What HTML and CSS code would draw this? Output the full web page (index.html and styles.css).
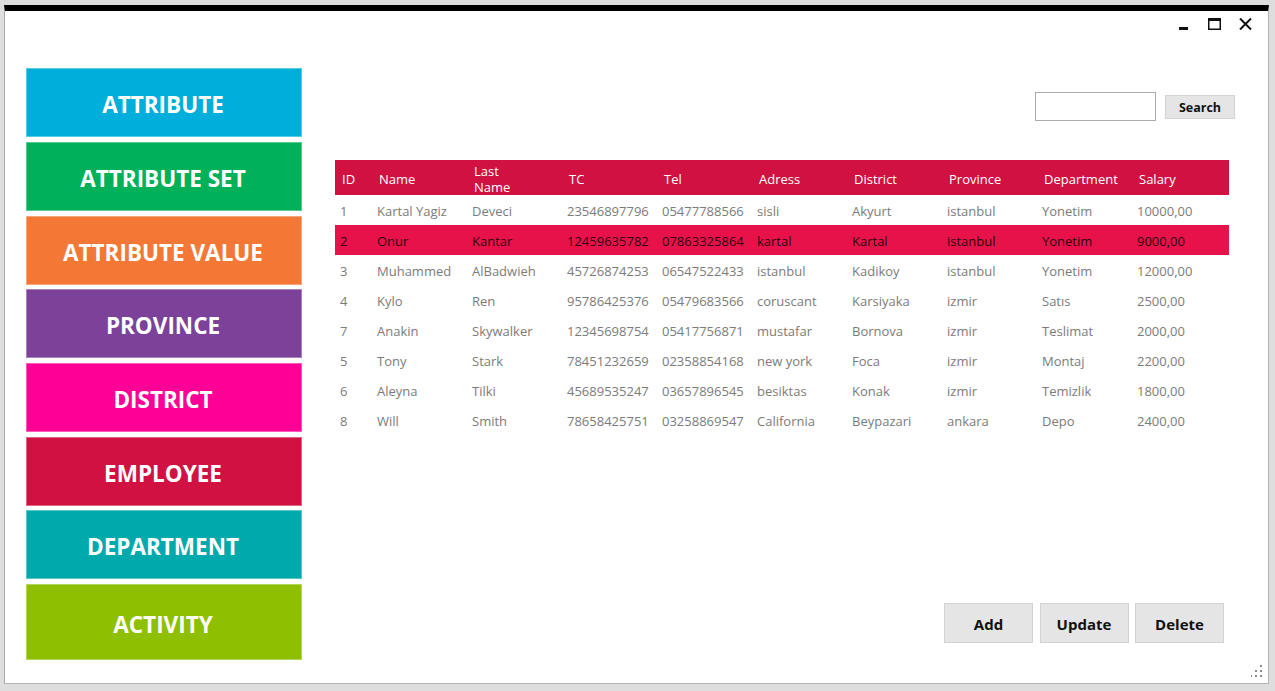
FILE: index.html
```html
<!DOCTYPE html>
<html>
<head>
<meta charset="utf-8">
<link rel="stylesheet" href="styles.css">
</head>
<body>
<div class="window">
  <div class="titlebar">
    <span class="ctl ctl-min"><svg width="9" height="3" viewBox="0 0 9 3"><rect width="9" height="3" fill="#111"/></svg></span>
    <span class="ctl ctl-max"><svg width="13" height="12" viewBox="0 0 13 12"><rect x="0.75" y="1.5" width="11.5" height="9.75" fill="none" stroke="#111" stroke-width="1.5"/><rect x="0" y="0" width="13" height="3" fill="#111"/></svg></span>
    <span class="ctl ctl-close"><svg width="13" height="12" viewBox="0 0 13 12"><path d="M1 0.5 L12 11.5 M12 0.5 L1 11.5" stroke="#111" stroke-width="2" fill="none"/></svg></span>
  </div>
  <div class="main">
    <nav class="sidebar">
      <div class="tile c-attr">ATTRIBUTE</div>
      <div class="tile c-set">ATTRIBUTE SET</div>
      <div class="tile c-val">ATTRIBUTE VALUE</div>
      <div class="tile c-prov">PROVINCE</div>
      <div class="tile c-dist">DISTRICT</div>
      <div class="tile c-emp">EMPLOYEE</div>
      <div class="tile c-dep">DEPARTMENT</div>
      <div class="tile c-act tile-last">ACTIVITY</div>
    </nav>
    <section class="content">
      <div class="searchrow">
        <input class="searchbox" type="text">
        <button class="searchbtn">Search</button>
      </div>
      <table class="grid">
        <colgroup>
          <col class="w-id"><col class="w-c"><col class="w-c"><col class="w-c"><col class="w-c"><col class="w-c"><col class="w-c"><col class="w-c"><col class="w-c"><col class="w-last">
        </colgroup>
        <thead>
          <tr><th>ID</th><th>Name</th><th class="two">Last<br>Name</th><th>TC</th><th>Tel</th><th>Adress</th><th>District</th><th>Province</th><th>Department</th><th>Salary</th></tr>
        </thead>
        <tbody>
          <tr><td>1</td><td>Kartal Yagiz</td><td>Deveci</td><td>23546897796</td><td>05477788566</td><td>sisli</td><td>Akyurt</td><td>istanbul</td><td>Yonetim</td><td>10000,00</td></tr>
          <tr class="sel"><td>2</td><td>Onur</td><td>Kantar</td><td>12459635782</td><td>07863325864</td><td>kartal</td><td>Kartal</td><td>istanbul</td><td>Yonetim</td><td>9000,00</td></tr>
          <tr><td>3</td><td>Muhammed</td><td>AlBadwieh</td><td>45726874253</td><td>06547522433</td><td>istanbul</td><td>Kadikoy</td><td>istanbul</td><td>Yonetim</td><td>12000,00</td></tr>
          <tr><td>4</td><td>Kylo</td><td>Ren</td><td>95786425376</td><td>05479683566</td><td>coruscant</td><td>Karsiyaka</td><td>izmir</td><td>Satıs</td><td>2500,00</td></tr>
          <tr><td>7</td><td>Anakin</td><td>Skywalker</td><td>12345698754</td><td>05417756871</td><td>mustafar</td><td>Bornova</td><td>izmir</td><td>Teslimat</td><td>2000,00</td></tr>
          <tr><td>5</td><td>Tony</td><td>Stark</td><td>78451232659</td><td>02358854168</td><td>new york</td><td>Foca</td><td>izmir</td><td>Montaj</td><td>2200,00</td></tr>
          <tr><td>6</td><td>Aleyna</td><td>Tilki</td><td>45689535247</td><td>03657896545</td><td>besiktas</td><td>Konak</td><td>izmir</td><td>Temizlik</td><td>1800,00</td></tr>
          <tr><td>8</td><td>Will</td><td>Smith</td><td>78658425751</td><td>03258869547</td><td>California</td><td>Beypazari</td><td>ankara</td><td>Depo</td><td>2400,00</td></tr>
        </tbody>
      </table>
      <div class="actions">
        <button class="actbtn">Add</button>
        <button class="actbtn">Update</button>
        <button class="actbtn">Delete</button>
      </div>
    </section>
  </div>
  <svg class="grip" width="12" height="12" viewBox="0 0 12 12">
    <rect x="9" y="0" width="2" height="2" fill="#8a8a8a"/>
    <rect x="4" y="5" width="2" height="2" fill="#8a8a8a"/>
    <rect x="9" y="5" width="2" height="2" fill="#8a8a8a"/>
    <rect x="-1" y="10" width="2" height="2" fill="#8a8a8a"/>
    <rect x="4" y="10" width="2" height="2" fill="#8a8a8a"/>
    <rect x="9" y="10" width="2" height="2" fill="#8a8a8a"/>
  </svg>
</div>
</body>
</html>
```
FILE: styles.css
```css
html, body {
  margin: 0;
  padding: 0;
  background: #dedede;
}
body {
  padding: 5px 6px 7px 4px;
  font-family: "Open Sans", "Noto Sans", sans-serif;
}
.window {
  position: relative;
  box-sizing: border-box;
  width: 1265px;
  height: 679px;
  background: #fff;
  border-top: 6px solid #000;
  border-left: 1px solid #a9a9a9;
  border-right: 1px solid #b5b5b5;
  border-bottom: 1px solid #b5b5b5;
  display: flex;
  flex-direction: column;
}
.titlebar {
  height: 30px;
  display: flex;
  justify-content: flex-end;
  align-items: flex-start;
  padding-right: 7px;
}
.ctl {
  display: flex;
  width: 31px;
  justify-content: center;
}
.ctl-min { padding-top: 16px; }
.ctl-max { padding-top: 7px; }
.ctl-close { padding-top: 7px; }
.ctl svg { display: block; }
.main {
  flex: 1;
  display: flex;
  padding: 28px 33px 23px 21px;
  gap: 33px;
}
.sidebar {
  width: 276px;
  display: flex;
  flex-direction: column;
  gap: 4.7px;
}
.tile {
  box-sizing: border-box;
  height: 69px;
  display: flex;
  align-items: center;
  justify-content: center;
  color: #fff;
  font-weight: 700;
  font-size: 22.5px;
  border: 1px solid rgba(255,255,255,0.35);
  padding-top: 4px;
  padding-right: 2px;
}
.tile-last { height: 76px; }
.c-attr { background: #00aedb; }
.c-set  { background: #00b159; }
.c-val  { background: #f37735; }
.c-prov { background: #7c4199; }
.c-dist { background: #ff0097; }
.c-emp  { background: #d11141; }
.c-dep  { background: #00aaac; }
.c-act  { background: #8ebf00; }

.content {
  flex: 1;
  display: flex;
  flex-direction: column;
}
.searchrow {
  margin-top: 24px;
  display: flex;
  justify-content: flex-end;
  align-items: center;
  gap: 9px;
  height: 29px;
}
.searchbox {
  box-sizing: border-box;
  width: 121px;
  height: 29px;
  margin: 0;
  border: 1px solid #acacac;
  background: #fff;
  padding: 0 4px;
}
.searchbtn {
  box-sizing: border-box;
  width: 70px;
  height: 24px;
  margin: 0;
  padding: 2px 0 0 0;
  background: #e5e5e5;
  border: 1px solid #d4d4d4;
  font-family: "Open Sans", "Noto Sans", sans-serif;
  font-weight: 700;
  font-size: 12.5px;
  color: #111;
}
.grid {
  margin-top: 39px;
  width: 894px;
  border-collapse: collapse;
  table-layout: fixed;
  font-size: 13px;
}
.w-id { width: 37px; }
.w-c { width: 95px; }
.w-last { width: 97px; }
.grid th {
  background: #d11141;
  color: #fff;
  font-weight: 400;
  text-align: left;
  height: 35px;
  box-sizing: border-box;
  padding: 3px 0 0 7px;
  line-height: 16px;
  white-space: nowrap;
}
.grid td {
  height: 30px;
  box-sizing: border-box;
  padding: 2px 0 0 5px;
  color: #7b7b7b;
  white-space: nowrap;
}
.grid tr.sel td {
  background: #e8124a;
  color: #2d0610;
}
.actions {
  margin-top: auto;
  margin-bottom: 17px;
  display: flex;
  justify-content: flex-end;
  gap: 6.5px;
  padding-right: 11px;
}
.actbtn {
  box-sizing: border-box;
  width: 89px;
  height: 40px;
  margin: 0;
  padding: 1px 0 0 0;
  background: #e5e5e5;
  border: 1px solid #d2d2d2;
  font-family: "Open Sans", "Noto Sans", sans-serif;
  font-weight: 700;
  font-size: 15px;
  color: #111;
}
.grip {
  position: absolute;
  right: 5px;
  bottom: 6px;
}
```
